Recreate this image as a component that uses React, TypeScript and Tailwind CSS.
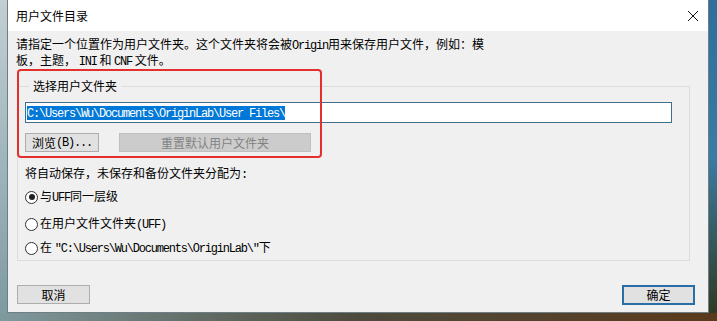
import React from 'react'

const cjk = "font-['SimSun','Noto_Sans_CJK_SC',sans-serif]"

// ascii runs render half-width like the bitmap font in the screenshot
function A({ children }: { children: React.ReactNode }) {
  return <span className="font-['Liberation_Mono',monospace] text-[12px] tracking-[-1.2px]">{children}</span>
}

function Radio({ checked, children }: { checked?: boolean; children: React.ReactNode }) {
  return (
    <div className="flex items-center h-[14px] gap-[2px]">
      <span className="w-[13px] h-[13px] rounded-full border border-[#333] bg-white flex items-center justify-center shrink-0">
        {checked && <span className="w-[6px] h-[6px] rounded-full bg-[#222]" />}
      </span>
      <span className="leading-[14px]">{children}</span>
    </div>
  )
}

export default function App() {
  return (
    <div className={`w-[717px] h-[321px] flex flex-col overflow-hidden text-[12px] text-black ${cjk}`}>
      <div className="flex flex-1 min-h-0">
        {/* wallpaper, left */}
        <div className="w-[7px] bg-gradient-to-b from-[#c3cfd2] via-[#9fb6bc] to-[#7f9ba0]" />

        {/* dialog */}
        <div className="relative w-[702px] flex flex-col border-x border-b border-[#6f7d84] bg-[#f0f0f0]">
          {/* title bar */}
          <div className="h-[31px] bg-white flex items-center justify-between pl-[8px] pr-[9px]">
            <span className="font-['Noto_Sans_CJK_SC',sans-serif] leading-[14px]">用户文件目录</span>
            <svg width="12" height="12" viewBox="0 0 12 12" className="text-[#111]">
              <path d="M1 1 L11 11 M11 1 L1 11" stroke="currentColor" strokeWidth="1" fill="none" />
            </svg>
          </div>

          <div className="flex-1 flex flex-col pl-[9px] pr-[13px] pt-[6px] pb-[7px]">
            <p className="leading-[13px] -ml-[1px]">
              请指定一个位置作为用户文件夹。这个文件夹将会被<A>Origin</A>用来保存用户文件，例如：模
              <br />
              板，主题， <A>INI</A> 和 <A>CNF</A> 文件。
            </p>

            <fieldset className="mt-[11px] w-[673px] border border-[#dcdcdc] pl-[7px] pr-[17px] pb-[5px]">
              <legend className="ml-[4px] px-[4px] leading-[12px]">选择用户文件夹</legend>

              <div className="mt-[10px] h-[21px] border border-[#3f6f8c] bg-white flex items-center pl-[1px]">
                <span className="bg-[#0078d7] text-white leading-[12px]">
                  <A>C:\Users\Wu\Documents\OriginLab\User Files\</A>
                </span>
              </div>

              <div className="mt-[10px] flex gap-[20px]">
                <div className="w-[74px] h-[19px] bg-[#e1e1e1] border border-[#adadad] flex items-center justify-center leading-[12px]">
                  浏览<A>(B)...</A>
                </div>
                <div className="w-[192px] h-[19px] bg-[#cccccc] border border-[#bfbfbf] text-[#838383] flex items-center justify-center leading-[12px]">
                  重置默认用户文件夹
                </div>
              </div>

              <p className="mt-[15px] leading-[12px]">将自动保存，未保存和备份文件夹分配为<A>:</A></p>

              <div className="mt-[9px]">
                <Radio checked>与<A>UFF</A>同一层级</Radio>
              </div>
              <div className="mt-[13px]">
                <Radio>在用户文件文件夹<A>(UFF)</A></Radio>
              </div>
              <div className="mt-[10px]">
                <Radio>在 <A> "C:\Users\Wu\Documents\OriginLab\"</A>下</Radio>
              </div>
            </fieldset>

            <div className="mt-auto flex justify-between">
              <div className="w-[73px] h-[19px] bg-[#e1e1e1] border border-[#adadad] flex items-center justify-center leading-[12px]">
                取消
              </div>
              <div className="w-[73px] h-[20px] bg-[#e1e1e1] border-2 border-[#2b6ea5] flex items-center justify-center leading-[12px]">
                确定
              </div>
            </div>
          </div>

          {/* red annotation frame */}
          <div className="absolute left-[9px] top-[69px] w-[305px] h-[89px] rounded-[4px] border-[2px] border-[#e3302c]" />
        </div>

        {/* wallpaper, right */}
        <div className="flex-1 bg-gradient-to-b from-[#2f6e9c] via-[#3a7ca4] to-[#2f3a22]" />
      </div>

      {/* wallpaper, bottom */}
      <div className="h-[8px] bg-gradient-to-r from-[#7f9a9e] via-[#4c4a3c] to-[#5a3a1c]" />
    </div>
  )
}
